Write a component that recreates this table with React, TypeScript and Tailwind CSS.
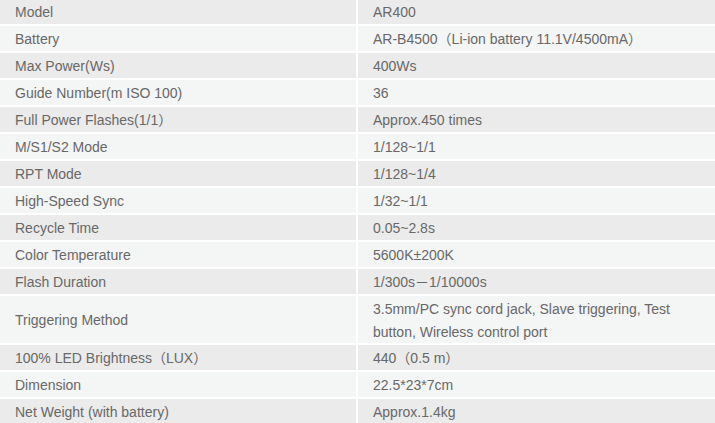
import React from "react";

const rows: [string, string, boolean?][] = [
  ["Model", "AR400"],
  ["Battery", "AR-B4500（Li-ion battery 11.1V/4500mA）"],
  ["Max Power(Ws)", "400Ws"],
  ["Guide Number(m ISO 100)", "36"],
  ["Full Power Flashes(1/1）", "Approx.450 times"],
  ["M/S1/S2 Mode", "1/128~1/1"],
  ["RPT Mode", "1/128~1/4"],
  ["High-Speed Sync", "1/32~1/1"],
  ["Recycle Time", "0.05~2.8s"],
  ["Color Temperature", "5600K±200K"],
  ["Flash Duration", "1/300s－1/10000s"],
  ["Triggering Method", "3.5mm/PC sync cord jack, Slave triggering, Test button, Wireless control port", true],
  ["100% LED Brightness（LUX）", "440（0.5 m）"],
  ["Dimension", "22.5*23*7cm"],
  ["Net Weight (with battery)", "Approx.1.4kg"],
];

export default function App() {
  return (
    <div
      className="w-[715px] h-[423px] overflow-hidden bg-white text-[14px] text-[#686868]"
      style={{ fontFamily: '"Liberation Sans", Arial, "Noto Sans CJK SC", sans-serif' }}
    >
      <div className="-mt-px grid grid-cols-[356px_357px] gap-[2px]">
        {rows.map(([k, v, dbl], i) => {
          const bg = i % 2 === 0 ? "bg-[#ebebeb]" : "bg-[#f4f5f5]";
          const h = dbl ? "h-[47px]" : "h-[25px]";
          return (
            <React.Fragment key={k}>
              <div className={`${bg} ${h} flex items-center pl-[15px] pt-[2px] leading-[23px]`}>{k}</div>
              <div className={`${bg} ${h} flex items-center pl-[15px] pr-[30px] pt-[2px] leading-[23px]`}>{v}</div>
            </React.Fragment>
          );
        })}
      </div>
    </div>
  );
}
